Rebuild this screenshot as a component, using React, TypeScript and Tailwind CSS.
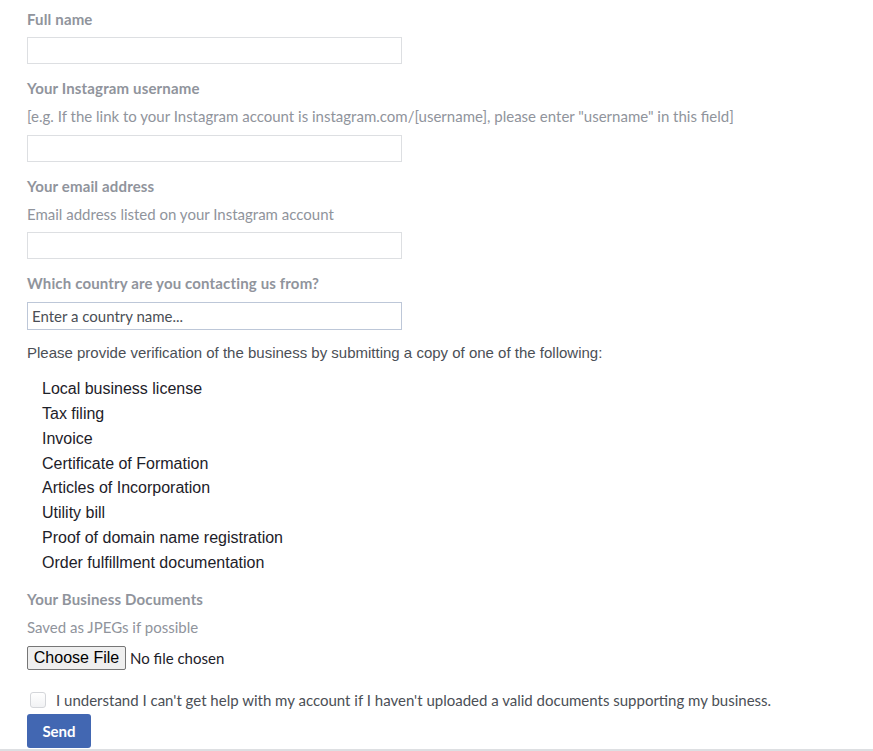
import React from "react";

const labelCls = "block text-[15px] leading-[18px] font-bold tracking-[0.15px] text-[#90949c]";
const helpCls = "block text-[15px] leading-[18px] text-[#90949c]";
const inputCls = "block w-[375px] h-[27px] border border-[#dddfe2] bg-white outline-none";

const docs = [
  "Local business license",
  "Tax filing",
  "Invoice",
  "Certificate of Formation",
  "Articles of Incorporation",
  "Utility bill",
  "Proof of domain name registration",
  "Order fulfillment documentation",
];

export default function App() {
  return (
    <div className="w-[873px] h-[751px] overflow-hidden bg-white font-['Lato',sans-serif]">
      <div className="pl-[27px] pt-[10px]">
        <label className={labelCls}>Full name</label>
        <input className={`${inputCls} mt-[9px]`} />

        <label className={`${labelCls} mt-[15px]`}>Your Instagram username</label>
        <span className={`${helpCls} mt-[10px]`}>
          [e.g. If the link to your Instagram account is instagram.com/[username], please enter "username" in this field]
        </span>
        <input className={`${inputCls} mt-[10px]`} />

        <label className={`${labelCls} mt-[15px]`}>Your email address</label>
        <span className={`${helpCls} mt-[10px]`}>Email address listed on your Instagram account</span>
        <input className={`${inputCls} mt-[9px]`} />

        <label className={`${labelCls} mt-[15px]`}>Which country are you contacting us from?</label>
        <input
          className="block w-[375px] h-[28px] mt-[10px] border border-[#bdc7d8] bg-white px-[4px] text-[15px] text-[#1d2129] placeholder:text-[#4b4f56] outline-none"
          placeholder="Enter a country name..."
        />

        <p className="mt-[14px] text-[15px] leading-[18px] text-[#4b4f56] font-['Liberation_Sans',Arial,sans-serif]">
          Please provide verification of the business by submitting a copy of one of the following:
        </p>
        <ul className="mt-[15px] pl-[15px] text-[16px] leading-[24.86px] text-[#1d2129] font-['Liberation_Sans',Arial,sans-serif]">
          {docs.map((d) => (
            <li key={d}>{d}</li>
          ))}
        </ul>

        <label className={`${labelCls} mt-[14px]`}>Your Business Documents</label>
        <span className={`${helpCls} mt-[10px]`}>Saved as JPEGs if possible</span>
        <div className="mt-[10px] flex items-center h-[24px]">
          <button className="h-[24px] w-[99px] rounded-[2px] border border-[#767676] bg-[#efefef] text-[16px] text-[#000] font-['Liberation_Sans',Arial,sans-serif] leading-none">
            Choose File
          </button>
          <span className="ml-[4px] text-[15px] text-[#1d2129]">No file chosen</span>
        </div>

        <div className="mt-[22px] flex items-center h-[16px]">
          <span className="w-[16px] h-[16px] ml-[3px] rounded-[3px] border border-[#d4d6da] bg-gradient-to-b from-[#ffffff] to-[#f1f2f4]" />
          <span className="ml-[10px] text-[15px] text-[#4b4f56]">
            I understand I can't get help with my account if I haven't uploaded a valid documents supporting my business.
          </span>
        </div>

        <button className="mt-[6px] block w-[64px] h-[34px] rounded-[3px] bg-[#4267b2] text-white text-[15px] font-bold">
          Send
        </button>
      </div>
      <div className="mt-[1px] h-[2px] bg-[#dddfe2]" />
    </div>
  );
}
